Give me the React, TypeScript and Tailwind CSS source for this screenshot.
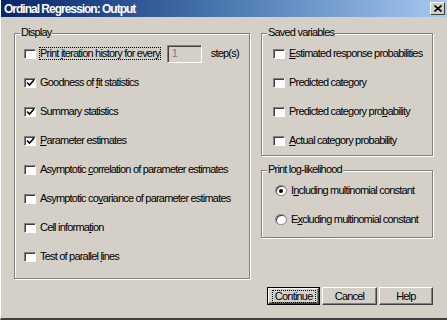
import React from 'react';

const font = { fontFamily: '"Liberation Sans", Arial, sans-serif' };

function CheckBox({ checked }: { checked?: boolean }) {
  return (
    <div className="relative w-[12px] h-[10px] shrink-0 bg-white border border-t-[#808080] border-l-[#808080] border-r-white border-b-white shadow-[inset_1px_1px_0_#404040]">
      {checked && (
        <svg className="absolute left-[1px] top-0" width="9" height="8" viewBox="0 0 9 8">
          <path d="M1 3.5 L3.5 6 L8 1" stroke="#000" strokeWidth="1.6" fill="none" />
        </svg>
      )}
    </div>
  );
}

function Radio({ checked }: { checked?: boolean }) {
  return (
    <div className="w-[12px] h-[11px] shrink-0 rounded-full bg-white border border-[#808080] shadow-[inset_1px_1px_0_#404040] flex items-center justify-center">
      {checked && <div className="w-[4px] h-[4px] rounded-full bg-black" />}
    </div>
  );
}

function Row({ children, checked, radio }: { children: React.ReactNode; checked?: boolean; radio?: boolean }) {
  return (
    <div className="h-[29px] flex items-center gap-[4px]">
      {radio ? <Radio checked={checked} /> : <CheckBox checked={checked} />}
      <span className="whitespace-nowrap leading-none">{children}</span>
    </div>
  );
}

function Group({ title, className, children }: { title: string; className: string; children: React.ReactNode }) {
  return (
    <div className={`relative border border-[#808080] shadow-[inset_1px_1px_0_#fff,1px_1px_0_#fff] ${className}`}>
      <span className="absolute -top-[7px] left-[5px] px-[1px] bg-[#d4d0c8] leading-none">{title}</span>
      {children}
    </div>
  );
}

function Button({ label, primary }: { label: string; primary?: boolean }) {
  return (
    <div className={`h-[18px] flex items-center justify-center bg-[#d4d0c8] ${primary ? 'w-[54px] border border-black' : 'w-[55px]'}`}>
      <div className="w-full h-full border border-t-white border-l-white border-r-[#404040] border-b-[#404040] shadow-[inset_-1px_-1px_0_#808080] flex items-center justify-center">
        <span className={`leading-none px-[2px] ${primary ? 'outline outline-1 outline-dotted outline-black' : ''}`}>{label}</span>
      </div>
    </div>
  );
}

export default function App() {
  return (
    <div className="w-[447px] h-[320px] bg-[#d4d0c8] text-[11px] tracking-[-0.8px] text-black overflow-hidden border-l border-l-white border-b-2 border-b-[#404040]" style={font}>
      {/* Title bar */}
      <div className="h-[17px] flex items-center justify-between pl-[3px] pr-[2px] bg-gradient-to-r from-[#0a246a] via-[#4a78b0] to-[#a6caf0]">
        <span className="text-white font-bold text-[12px] tracking-[-1px] leading-none">Ordinal Regression: Output</span>
        <div className="w-[15px] h-[13px] bg-[#d4d0c8] border border-t-white border-l-white border-r-[#404040] border-b-[#404040] flex items-center justify-center">
          <svg width="8" height="7" viewBox="0 0 8 7">
            <path d="M0.5 0.5 L7.5 6.5 M7.5 0.5 L0.5 6.5" stroke="#000" strokeWidth="1.6" />
          </svg>
        </div>
      </div>

      <div className="flex gap-[11px] pl-[13px] pt-[16px]">
        {/* Display */}
        <Group title="Display" className="w-[236px] h-[246px] pt-[5px] pl-[9px]">
          <div className="h-[29px] w-[224px] overflow-hidden flex items-center gap-[4px]">
            <CheckBox />
            <span className="whitespace-nowrap leading-none outline outline-1 outline-dotted outline-black">
              Print <u>i</u>teration history for every
            </span>
            <div className="shrink-0 ml-[3px] w-[35px] h-[18px] border border-t-[#808080] border-l-[#808080] border-r-white border-b-white shadow-[inset_1px_1px_0_#404040] flex items-center pl-[4px] text-[#808080]">
              1
            </div>
            <span className="shrink-0 ml-[5px] whitespace-nowrap leading-none">step(s)</span>
          </div>
          <Row checked>Goodness of <u>f</u>it statistics</Row>
          <Row checked>Summary statistics</Row>
          <Row checked><u>P</u>arameter estimates</Row>
          <Row>Asymptotic <u>c</u>orrelation of parameter estimates</Row>
          <Row>Asymptotic co<u>v</u>ariance of parameter estimates</Row>
          <Row>Cell informa<u>t</u>ion</Row>
          <Row>Test of parallel <u>l</u>ines</Row>
        </Group>

        {/* Right column */}
        <div className="w-[172px] h-[272px] flex flex-col">
          <Group title="Saved variables" className="h-[123px] pt-[5px] pl-[11px]">
            <Row><u>E</u>stimated response probabilities</Row>
            <Row>Predicted category</Row>
            <Row>Predicted category pro<u>b</u>ability</Row>
            <Row><u>A</u>ctual category probability</Row>
          </Group>
          <Group title="Print log-likelihood" className="mt-[14px] h-[68px] pt-[5px] pl-[13px]">
            <Row radio checked>I<u>n</u>cluding multinomial constant</Row>
            <Row radio>E<u>x</u>cluding multinomial constant</Row>
          </Group>
          <div className="mt-auto ml-[6px] flex gap-[2px]">
            <Button label="Continue" primary />
            <Button label="Cancel" />
            <Button label="Help" />
          </div>
        </div>
      </div>
    </div>
  );
}
